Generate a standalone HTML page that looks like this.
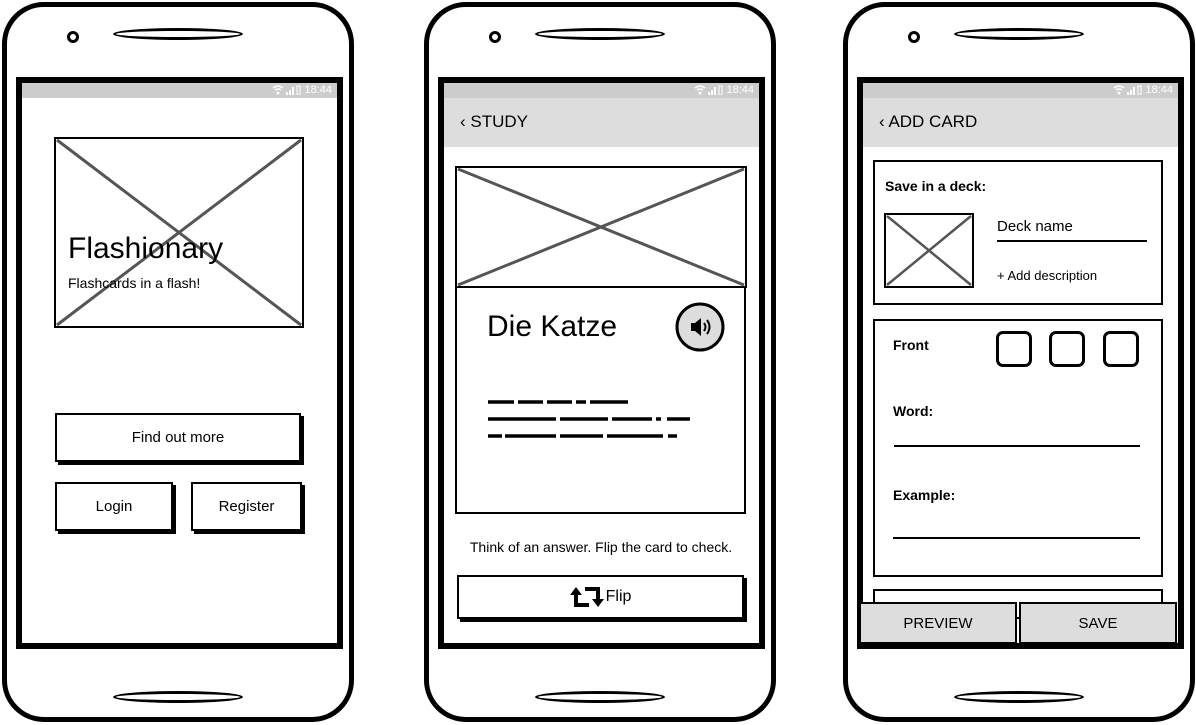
<!DOCTYPE html>
<html><head><meta charset="utf-8"><style>
*{margin:0;padding:0;box-sizing:border-box}
body{width:1196px;height:725px;background:#fff;position:relative;overflow:hidden;font-family:"Liberation Sans",sans-serif;color:#000}
.a{position:absolute}
.phone{position:absolute;top:2px;width:352px;height:720px;border:5px solid #000;border-radius:42px}
.screen{position:absolute;top:77px;width:327px;height:572px;border:6px solid #000;background:#fff;overflow:hidden}
.status{position:absolute;left:0;top:0;right:0;height:15px;background:#ccc;color:#fff;font-size:11px;text-align:right;padding-right:5px;line-height:15px}
.spk{position:absolute;width:130px;height:12px;border:3px solid #000;border-radius:50%}
.cam{position:absolute;width:12px;height:12px;border:3px solid #000;border-radius:50%}
.btn{position:absolute;border:2px solid #000;box-shadow:3px 3px 0 #000;background:#fff;text-align:center;font-size:15px}
.nav{position:absolute;left:0;right:0;top:15px;height:49px;background:#ddd;font-size:17px;line-height:47px;padding-left:16px}
.box{position:absolute;border:2px solid #000;background:#fff}
.lbl{position:absolute;font-weight:bold;font-size:14px}
.sq{position:absolute;width:36px;height:36px;border:3px solid #000;border-radius:7px}
.ln{position:absolute;height:2px;background:#000}
.st{display:inline-block;vertical-align:middle}
</style></head><body>

<!-- phone 1 -->
<div class="phone" style="left:2px"></div>
<div class="cam" style="left:67px;top:31px"></div>
<div class="spk" style="left:113px;top:28px"></div>
<div class="spk" style="left:113px;top:691px"></div>
<div class="screen" style="left:16px">
 <div class="status"><svg class="st" width="30" height="10"><path d="M2 3q5-4 10 0M4 5q3-2 6 0" stroke="#fff" stroke-width="1.5" fill="none"/><circle cx="7" cy="8" r="1.5" fill="#fff"/><rect x="15" y="7" width="2" height="3" fill="#fff"/><rect x="18" y="5" width="2" height="5" fill="#fff"/><rect x="21" y="2" width="2" height="8" fill="#fff"/><rect x="26" y="1" width="3" height="9" fill="none" stroke="#fff"/></svg> 18:44</div>
</div>
<svg class="a" style="left:54px;top:137px" width="250" height="191"><rect x="1" y="1" width="248" height="189" fill="none" stroke="#000" stroke-width="2"/><path d="M3 3L247 188M247 3L3 188" stroke="#555" stroke-width="3"/></svg>
<div class="a" style="left:68px;top:232px;font-size:30px">Flashionary</div>
<div class="a" style="left:68px;top:275px;font-size:14px">Flashcards in a flash!</div>
<div class="btn" style="left:55px;top:413px;width:246px;height:49px;line-height:45px">Find out more</div>
<div class="btn" style="left:55px;top:482px;width:118px;height:49px;line-height:45px">Login</div>
<div class="btn" style="left:191px;top:482px;width:111px;height:49px;line-height:45px">Register</div>

<!-- phone 2 -->
<div class="phone" style="left:424px"></div>
<div class="cam" style="left:489px;top:31px"></div>
<div class="spk" style="left:535px;top:28px"></div>
<div class="spk" style="left:535px;top:691px"></div>
<div class="screen" style="left:438px">
 <div class="status"><svg class="st" width="30" height="10"><path d="M2 3q5-4 10 0M4 5q3-2 6 0" stroke="#fff" stroke-width="1.5" fill="none"/><circle cx="7" cy="8" r="1.5" fill="#fff"/><rect x="15" y="7" width="2" height="3" fill="#fff"/><rect x="18" y="5" width="2" height="5" fill="#fff"/><rect x="21" y="2" width="2" height="8" fill="#fff"/><rect x="26" y="1" width="3" height="9" fill="none" stroke="#fff"/></svg> 18:44</div>
 <div class="nav">‹ STUDY</div>
</div>
<svg class="a" style="left:455px;top:166px" width="292" height="350"><rect x="1" y="1" width="290" height="120" fill="none" stroke="#000" stroke-width="2"/><path d="M3 3L289 119M289 3L3 119" stroke="#555" stroke-width="3"/><rect x="1" y="121" width="289" height="226" fill="none" stroke="#000" stroke-width="2"/>
<g stroke="#000" stroke-width="3.5" fill="none">
<path d="M33 236h26M63 236h25M92 236h25M121 236h10M135 236h38"/>
<path d="M33 253h68M105 253h48M157 253h40M201 253h5M212 253h23"/>
<path d="M33 270h14M50 270h51M105 270h43M152 270h56M213 270h9"/>
</g>
<circle cx="245" cy="161" r="23" fill="#ddd" stroke="#000" stroke-width="3"/><path d="M236 157h4l6-5v18l-6-5h-4z" fill="#000"/><path d="M249 157q3 4 0 8M252 154q5 7 0 14" stroke="#000" stroke-width="2" fill="none"/></svg>
<div class="a" style="left:487px;top:310px;font-size:30px">Die Katze</div>
<div class="a" style="left:440px;top:539px;width:322px;text-align:center;font-size:14px">Think of an answer. Flip the card to check.</div>
<div class="btn" style="left:457px;top:575px;width:287px;height:44px;line-height:40px;font-size:16px"><svg width="34" height="24" style="vertical-align:middle;margin-right:2px"><path d="M6 9v11h13M28 15V4H15" stroke="#000" stroke-width="4" fill="none"/><path d="M0 10L6 2L12 10zM22 14L28 22L34 14z" fill="#000"/></svg>Flip</div>

<!-- phone 3 -->
<div class="phone" style="left:843px"></div>
<div class="cam" style="left:908px;top:31px"></div>
<div class="spk" style="left:954px;top:28px"></div>
<div class="spk" style="left:954px;top:691px"></div>
<div class="screen" style="left:857px">
 <div class="status"><svg class="st" width="30" height="10"><path d="M2 3q5-4 10 0M4 5q3-2 6 0" stroke="#fff" stroke-width="1.5" fill="none"/><circle cx="7" cy="8" r="1.5" fill="#fff"/><rect x="15" y="7" width="2" height="3" fill="#fff"/><rect x="18" y="5" width="2" height="5" fill="#fff"/><rect x="21" y="2" width="2" height="8" fill="#fff"/><rect x="26" y="1" width="3" height="9" fill="none" stroke="#fff"/></svg> 18:44</div>
 <div class="nav">‹ ADD CARD</div>
</div>
<div class="box" style="left:873px;top:160px;width:290px;height:145px"></div>
<div class="lbl" style="left:885px;top:178px">Save in a deck:</div>
<svg class="a" style="left:884px;top:213px" width="90" height="75"><rect x="1" y="1" width="88" height="73" fill="none" stroke="#000" stroke-width="2"/><path d="M3 3L87 72M87 3L3 72" stroke="#555" stroke-width="2.5"/></svg>
<div class="a" style="left:997px;top:218px;font-size:15px">Deck name</div>
<div class="ln" style="left:997px;top:240px;width:150px"></div>
<div class="a" style="left:997px;top:268px;font-size:13px">+ Add description</div>
<div class="box" style="left:873px;top:319px;width:290px;height:258px"></div>
<div class="lbl" style="left:893px;top:337px">Front</div>
<div class="sq" style="left:996px;top:331px"></div>
<div class="sq" style="left:1049px;top:331px"></div>
<div class="sq" style="left:1103px;top:331px"></div>
<div class="lbl" style="left:893px;top:403px">Word:</div>
<div class="ln" style="left:894px;top:445px;width:246px"></div>
<div class="lbl" style="left:893px;top:487px">Example:</div>
<div class="ln" style="left:893px;top:537px;width:247px"></div>
<div class="box" style="left:873px;top:589px;width:290px;height:30px"></div>
<div class="a" style="left:859px;top:602px;width:158px;height:42px;background:#ddd;border:2px solid #000;text-align:center;line-height:40px;font-size:15px">PREVIEW</div>
<div class="a" style="left:1019px;top:602px;width:158px;height:42px;background:#ddd;border:2px solid #000;text-align:center;line-height:40px;font-size:15px">SAVE</div>
</body></html>
